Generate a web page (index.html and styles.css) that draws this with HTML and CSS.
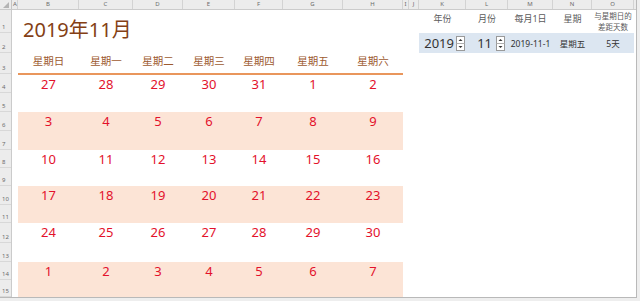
FILE: index.html
```html
<!DOCTYPE html>
<html lang="zh">
<head>
<meta charset="utf-8">
<title>2019年11月</title>
<link rel="stylesheet" href="styles.css">
</head>
<body>
<div class="sheet">
  <div class="colhead">
    <div class="ch corner"><svg width="6" height="6" viewBox="0 0 6 6"><path d="M6 0 L6 6 L0 6Z" fill="#b5b5b5"/></svg></div>
    <div class="ch c-a">A</div>
    <div class="ch c-b">B</div>
    <div class="ch c-c">C</div>
    <div class="ch c-d">D</div>
    <div class="ch c-e">E</div>
    <div class="ch c-f">F</div>
    <div class="ch c-g">G</div>
    <div class="ch c-h">H</div>
    <div class="ch c-i">I</div>
    <div class="ch c-j">J</div>
    <div class="ch c-k">K</div>
    <div class="ch c-l">L</div>
    <div class="ch c-m">M</div>
    <div class="ch c-n">N</div>
    <div class="ch c-o">O</div>
    <div class="ch c-p"></div>
  </div>
  <div class="main">
    <div class="rowhead">
      <div class="rh h23">1</div>
      <div class="rh h20">2</div>
      <div class="rh h21">3</div>
      <div class="rh h19">4</div>
      <div class="rh h19">5</div>
      <div class="rh h19">6</div>
      <div class="rh h19">7</div>
      <div class="rh h18">8</div>
      <div class="rh h18">9</div>
      <div class="rh h19">10</div>
      <div class="rh h18">11</div>
      <div class="rh h20">12</div>
      <div class="rh h19">13</div>
      <div class="rh h18">14</div>
      <div class="rh h17">15</div>
    </div>
    <div class="cells">
      <div class="col-a"></div>
      <div class="calendar">
        <div class="title">2019年11月</div>
        <div class="daynames">
          <div>星期日</div><div>星期一</div><div>星期二</div><div>星期三</div><div>星期四</div><div>星期五</div><div>星期六</div>
        </div>
        <div class="rule"></div>
        <div class="weeks">
          <div class="week"><div>27</div><div>28</div><div>29</div><div>30</div><div>31</div><div>1</div><div>2</div></div>
          <div class="week"><div>3</div><div>4</div><div>5</div><div>6</div><div>7</div><div>8</div><div>9</div></div>
          <div class="week"><div>10</div><div>11</div><div>12</div><div>13</div><div>14</div><div>15</div><div>16</div></div>
          <div class="week"><div>17</div><div>18</div><div>19</div><div>20</div><div>21</div><div>22</div><div>23</div></div>
          <div class="week"><div>24</div><div>25</div><div>26</div><div>27</div><div>28</div><div>29</div><div>30</div></div>
          <div class="week"><div>1</div><div>2</div><div>3</div><div>4</div><div>5</div><div>6</div><div>7</div></div>
        </div>
      </div>
      <div class="col-ij"></div>
      <div class="panel">
        <div class="phead">
          <div class="lbl">年份</div>
          <div class="lbl">月份</div>
          <div class="lbl">每月1日</div>
          <div class="lbl">星期</div>
          <div class="lbl two">与星期日的<br>差距天数</div>
        </div>
        <div class="pdata">
          <div class="spin-cell k"><span class="big">2019</span><svg class="spinner" width="9" height="15" viewBox="0 0 9 15"><rect x="0.5" y="0.5" width="8" height="14" fill="#fff" stroke="#9a9a9a"/><line x1="0.5" y1="7.5" x2="8.5" y2="7.5" stroke="#b0b0b0"/><path d="M2.5 5 L4.5 3 L6.5 5Z" fill="#333"/><path d="M2.5 10 L4.5 12 L6.5 10Z" fill="#333"/></svg></div>
          <div class="spin-cell l"><span class="big">11</span><svg class="spinner" width="9" height="15" viewBox="0 0 9 15"><rect x="0.5" y="0.5" width="8" height="14" fill="#fff" stroke="#9a9a9a"/><line x1="0.5" y1="7.5" x2="8.5" y2="7.5" stroke="#b0b0b0"/><path d="M2.5 5 L4.5 3 L6.5 5Z" fill="#333"/><path d="M2.5 10 L4.5 12 L6.5 10Z" fill="#333"/></svg></div>
          <div class="val">2019-11-1</div>
          <div class="val">星期五</div>
          <div class="val">5天</div>
        </div>
      </div>
      <div class="col-rest"></div>
    </div>
  </div>
</div>
</body>
</html>
```
FILE: styles.css
```css
* { box-sizing: border-box; }
html, body { margin: 0; padding: 0; }
body {
  width: 640px;
  height: 301px;
  background: #eeeeee;
  font-family: "Noto Sans", "Noto Sans CJK SC", sans-serif;
  overflow: hidden;
}
.sheet {
  width: 637px;
  height: 298px;
  background: #fff;
  border-right: 1px solid #b9b9b9;
  border-bottom: 1px solid #b9b9b9;
  display: flex;
  flex-direction: column;
  overflow: hidden;
}
.colhead {
  height: 10px;
  display: flex;
  background: #ececec;
  border-bottom: 1px solid #cbcbcb;
  flex: none;
}
.ch {
  height: 9px;
  border-right: 1px solid #d3d3d3;
  font-size: 6px;
  line-height: 9px;
  color: #6b6b6b;
  text-align: center;
  flex: none;
}
.corner { width: 12px; display: flex; align-items: flex-end; justify-content: flex-end; padding: 0 2px 1px 0; border-right-color: #c4c4c4; }
.c-a { width: 6px; text-align: left; padding-left: 1px; }
.c-b { width: 61px; }
.c-c { width: 54px; }
.c-d { width: 50px; }
.c-e { width: 52px; }
.c-f { width: 48px; }
.c-g { width: 60px; }
.c-h { width: 60px; }
.c-i { width: 6px; }
.c-j { width: 10px; }
.c-k { width: 47px; }
.c-l { width: 42px; }
.c-m { width: 45px; }
.c-n { width: 39px; }
.c-o { width: 42px; }
.c-p { flex: 1; border-right: none; }

.main { display: flex; flex: 1; }
.rowhead {
  width: 12px;
  flex: none;
  background: #ececec;
  border-right: 1px solid #cbcbcb;
  display: flex;
  flex-direction: column;
}
.rh {
  font-size: 6px;
  color: #6b6b6b;
  line-height: 8px;
  display: flex;
  align-items: flex-end;
  padding: 0 0 1px 2px;
  border-bottom: 1px solid #d8d8d8;
  flex: none;
}
.h17 { height: 17px; }
.h18 { height: 18px; }
.h19 { height: 19px; }
.h20 { height: 20px; }
.h21 { height: 21px; }
.h23 { height: 23px; }

.cells { display: flex; flex: 1; }
.col-a { width: 6px; flex: none; }
.col-ij { width: 16px; flex: none; }
.col-rest { flex: 1; }

.calendar { width: 385px; flex: none; display: flex; flex-direction: column; }
.title {
  height: 38px;
  padding: 6px 0 0 5px;
  font-size: 20px;
  line-height: 28px;
  color: #843f15;
}
.daynames, .week {
  display: grid;
  grid-template-columns: 61px 54px 50px 52px 48px 60px 60px;
}
.daynames {
  height: 25px;
  align-items: center;
  font-size: 10.5px;
  color: #9d5a2f;
  text-align: center;
}
.rule { height: 2px; background: #e9965c; }
.weeks {
  display: grid;
  grid-template-rows: 37px 38px 36px 37px 39px 35px;
}
.week {
  font-size: 13px;
  line-height: 18px;
  color: #e3112b;
  text-align: center;
}
.week:nth-child(even) { background: #fce4d6; }

.panel { width: 215px; flex: none; display: flex; flex-direction: column; }
.phead, .pdata {
  display: grid;
  grid-template-columns: 47px 42px 45px 39px 42px;
}
.phead { height: 23px; align-items: center; }
.lbl {
  font-size: 9px;
  line-height: 12px;
  color: #5a5a5a;
  text-align: center;
  align-self: start;
  padding-top: 3px;
}
.lbl.two {
  font-size: 7.5px;
  line-height: 10.5px;
  align-self: center;
  padding-top: 0;
  white-space: nowrap;
}
.pdata {
  height: 20px;
  background: #dce6f1;
  align-items: center;
}
.spin-cell { display: flex; align-items: center; justify-content: flex-end; }
.spin-cell.k { padding-right: 1px; }
.spin-cell.l { padding-right: 3px; }
.big { font-size: 13px; line-height: 16px; color: #333; }
.spinner { display: block; margin-left: 2px; }
.spin-cell.l .spinner { margin-left: 4px; }
.val {
  font-size: 8.5px;
  color: #333;
  text-align: center;
  white-space: nowrap;
}
```
